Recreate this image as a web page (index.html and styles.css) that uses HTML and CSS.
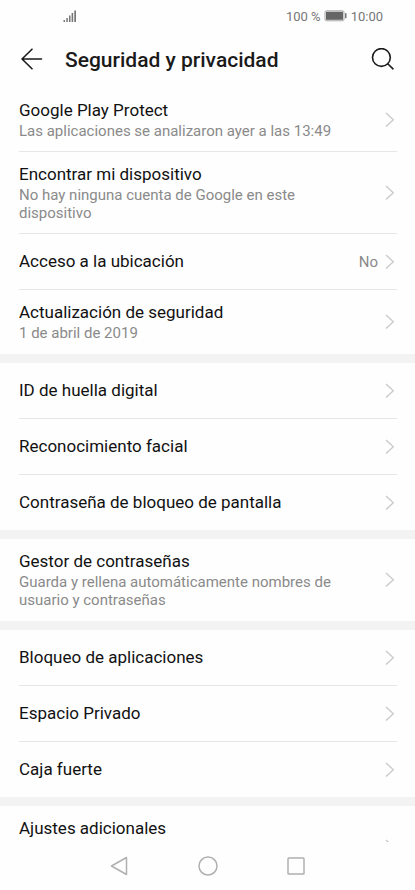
FILE: index.html
```html
<!DOCTYPE html>
<html lang="es">
<head>
<meta charset="utf-8">
<meta name="viewport" content="width=device-width, initial-scale=1">
<title>Seguridad y privacidad</title>
<link rel="stylesheet" href="styles.css">
</head>
<body>
<svg width="0" height="0" class="defs" aria-hidden="true">
  <symbol id="chevron" viewBox="0 0 10 16"><path d="M1 1 8.300 7.800 1 14.600" fill="none" stroke="#cbcbcb" stroke-width="1.400"/></symbol>
</svg>
<div class="status">
  <svg class="signal" width="14" height="12" viewBox="0 0 14 12" fill="#777" aria-hidden="true"><path d="M0.500 10h1.500v2h-1.500zM3.300 8h1.500v4h-1.500zM6 5.500h1.500v6.500h-1.500zM8.600 3h1.600v9h-1.600zM11.300 0.500h1.700v11.500h-1.700z"/></svg>
  <div class="status-right">
    <span>100 %</span>
    <svg width="24" height="12" viewBox="0 0 24 12" aria-hidden="true"><rect x="1" y="0.800" width="19" height="10" rx="1.500" fill="#eee" stroke="#aaa" stroke-width="1"/><rect x="2" y="1.800" width="17" height="8" fill="#666"/><rect x="21" y="3.200" width="1.500" height="5" fill="#777"/></svg>
    <span>10:00</span>
  </div>
</div>
<header class="bar">
  <button class="icon" aria-label="Atrás"><svg width="24" height="24" viewBox="0 0 24 24" fill="none" stroke="#1a1a1a" stroke-width="1.600" stroke-linecap="round" stroke-linejoin="round"><path d="M21.500 11H2M12 1.200 2 11l10 9.800"/></svg></button>
  <h1>Seguridad y privacidad</h1>
  <button class="icon" aria-label="Buscar"><svg width="24" height="24" viewBox="0 0 24 24" fill="none" stroke="#1a1a1a" stroke-width="1.600" stroke-linecap="round"><circle cx="10.400" cy="9.500" r="8.900"/><path d="m17 16 5 4.800"/></svg></button>
</header>
<main class="list">
  <section>
    <a class="row" href="#"><span class="text"><span class="title">Google Play Protect</span><span class="sub">Las aplicaciones se analizaron ayer a las 13:49</span></span><svg class="chev"><use href="#chevron"/></svg></a>
    <a class="row" href="#"><span class="text"><span class="title">Encontrar mi dispositivo</span><span class="sub">No hay ninguna cuenta de Google en este dispositivo</span></span><svg class="chev"><use href="#chevron"/></svg></a>
    <a class="row" href="#"><span class="text"><span class="title">Acceso a la ubicación</span></span><span class="value">No</span><svg class="chev"><use href="#chevron"/></svg></a>
    <a class="row" href="#"><span class="text"><span class="title">Actualización de seguridad</span><span class="sub">1 de abril de 2019</span></span><svg class="chev"><use href="#chevron"/></svg></a>
  </section>
  <section>
    <a class="row" href="#"><span class="text"><span class="title">ID de huella digital</span></span><svg class="chev"><use href="#chevron"/></svg></a>
    <a class="row" href="#"><span class="text"><span class="title">Reconocimiento facial</span></span><svg class="chev"><use href="#chevron"/></svg></a>
    <a class="row" href="#"><span class="text"><span class="title">Contraseña de bloqueo de pantalla</span></span><svg class="chev"><use href="#chevron"/></svg></a>
  </section>
  <section>
    <a class="row" href="#"><span class="text"><span class="title">Gestor de contraseñas</span><span class="sub">Guarda y rellena automáticamente nombres de usuario y contraseñas</span></span><svg class="chev"><use href="#chevron"/></svg></a>
  </section>
  <section>
    <a class="row" href="#"><span class="text"><span class="title">Bloqueo de aplicaciones</span></span><svg class="chev"><use href="#chevron"/></svg></a>
    <a class="row" href="#"><span class="text"><span class="title">Espacio Privado</span></span><svg class="chev"><use href="#chevron"/></svg></a>
    <a class="row" href="#"><span class="text"><span class="title">Caja fuerte</span></span><svg class="chev"><use href="#chevron"/></svg></a>
  </section>
  <section>
    <a class="row tall" href="#"><span class="text"><span class="title">Ajustes adicionales</span></span><svg class="chev"><use href="#chevron"/></svg></a>
  </section>
</main>
<nav class="nav">
  <button class="icon" aria-label="Volver"><svg width="20" height="20" viewBox="0 0 20 20" fill="none" stroke="#b0b0b0" stroke-width="1.500" stroke-linejoin="round"><path d="M16.500 1.500v17L1.500 10z"/></svg></button>
  <button class="icon" aria-label="Inicio"><svg width="20" height="20" viewBox="0 0 20 20" fill="none" stroke="#b0b0b0" stroke-width="1.500"><circle cx="10" cy="10" r="9"/></svg></button>
  <button class="icon" aria-label="Recientes"><svg width="20" height="20" viewBox="0 0 20 20" fill="none" stroke="#b0b0b0" stroke-width="1.500"><rect x="2" y="2" width="16" height="16" rx="0.800"/></svg></button>
</nav>
</body>
</html>
```
FILE: styles.css
```css
* { box-sizing: border-box; }
body {
  margin: 0;
  height: 100vh;
  display: flex;
  flex-direction: column;
  overflow: hidden;
  background: #fefefe;
  color: #111;
  font-family: Roboto, sans-serif;
}
svg { display: block; flex: none; }
.defs { position: absolute; }
.status {
  flex: none;
  display: flex;
  justify-content: space-between;
  align-items: center;
  height: 32px;
  padding: 0 32px 0 63px;
  font-size: 13px;
  color: #777;
}
.status-right { display: flex; align-items: center; gap: 3px; }
.bar {
  flex: none;
  display: flex;
  align-items: center;
  height: 56px;
  padding: 0 20px;
}
h1 {
  flex: 1;
  margin: 0 0 0 21px;
  font-size: 21px;
  font-weight: 500;
  line-height: 28px;
  color: #1a1a1a;
}
.icon { padding: 0; border: 0; background: none; }
.list { flex: 1; min-height: 0; overflow: hidden; }
section + section { border-top: 9px solid #f3f3f3; }
section:has(.row:last-child .sub) { padding-bottom: 1px; }
.row {
  display: flex;
  align-items: center;
  min-height: 55px;
  margin: 0 18px 0 19px;
  color: #111;
  text-decoration: none;
}
.row + .row { border-top: 1px solid #e6e6e6; min-height: 56px; }
.row.tall { min-height: 82px; align-items: stretch; }
.tall .chev { align-self: center; }
.text { flex: 1; padding: 11px 0; }
.title, .sub { display: block; }
.title { font-size: 17px; line-height: 23px; }
.sub { max-width: 330px; font-size: 15px; line-height: 18px; color: #8a8a8a; }
.value { margin-right: 7px; font-size: 15px; color: #8a8a8a; }
.chev { width: 10px; height: 16px; margin-right: 2px; }
.nav {
  flex: none;
  display: flex;
  justify-content: center;
  gap: 68px;
  height: 48px;
  padding-top: 14px;
}
.nav .icon { height: 20px; }
```
